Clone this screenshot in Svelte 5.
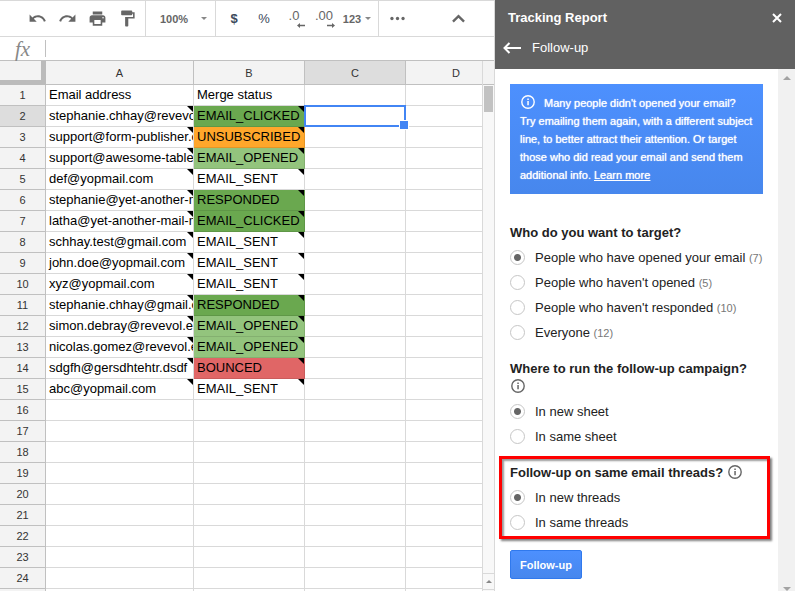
<script lang='ts'>
  interface Row {
    email: string
    status: string
  }

  const columns = ['A', 'B', 'C', 'D']

  const contacts: Row[] = [
    { email: 'stephanie.chhay@revevol', status: 'EMAIL_CLICKED' },
    { email: 'support@form-publisher.c', status: 'UNSUBSCRIBED' },
    { email: 'support@awesome-table.', status: 'EMAIL_OPENED' },
    { email: 'def@yopmail.com', status: 'EMAIL_SENT' },
    { email: 'stephanie@yet-another-m', status: 'RESPONDED' },
    { email: 'latha@yet-another-mail-m', status: 'EMAIL_CLICKED' },
    { email: 'schhay.test@gmail.com', status: 'EMAIL_SENT' },
    { email: 'john.doe@yopmail.com', status: 'EMAIL_SENT' },
    { email: 'xyz@yopmail.com', status: 'EMAIL_SENT' },
    { email: 'stephanie.chhay@gmail.c', status: 'RESPONDED' },
    { email: 'simon.debray@revevol.e', status: 'EMAIL_OPENED' },
    { email: 'nicolas.gomez@revevol.e', status: 'EMAIL_OPENED' },
    { email: 'sdgfh@gersdhtehtr.dsdf', status: 'BOUNCED' },
    { email: 'abc@yopmail.com', status: 'EMAIL_SENT' },
  ]

  const ROW_COUNT = 24
  const SELECTED_ROW = 2
  const emptyRows = Array.from({ length: ROW_COUNT - contacts.length - 1 }, (_, i) => i + contacts.length + 2)

  const targets = [
    { id: 'opened', label: 'People who have opened your email', count: 7 },
    { id: 'not-opened', label: 'People who haven\'t opened', count: 5 },
    { id: 'not-responded', label: 'People who haven\'t responded', count: 10 },
    { id: 'everyone', label: 'Everyone', count: 12 },
  ]

  let target = $state('opened')
  let sheet = $state('new')
  let thread = $state('new')
</script>

{#snippet info()}
  <svg class='info' viewBox='0 0 16 16' aria-hidden='true'>
    <circle cx='8' cy='8' r='6.2' fill='none' stroke='currentColor' stroke-width='1.4' />
    <path d='M7.3 7h1.5v4.2H7.3zM7.3 4.6h1.5v1.4H7.3z' fill='currentColor' />
  </svg>
{/snippet}

<div class='app'>
  <main class='sheet'>
    <div class='toolbar' role='toolbar' aria-label='Formatting'>
      <button class='tool' aria-label='Undo'>
        <svg viewBox='0 0 24 24'><path d='M12.5 8c-2.65 0-5.05.99-6.9 2.6L2 7v9h9l-3.62-3.62c1.39-1.16 3.16-1.88 5.12-1.88 3.54 0 6.55 2.31 7.6 5.5l2.37-.78C21.08 11.03 17.15 8 12.5 8z' /></svg>
      </button>
      <button class='tool' aria-label='Redo'>
        <svg viewBox='0 0 24 24'><path d='M18.4 10.6C16.55 8.99 14.15 8 11.5 8c-4.65 0-8.58 3.03-9.96 7.22L3.9 16c1.05-3.19 4.05-5.5 7.6-5.5 1.95 0 3.73.72 5.12 1.88L13 16h9V7l-3.6 3.6z' /></svg>
      </button>
      <button class='tool' aria-label='Print'>
        <svg viewBox='0 0 24 24'><path d='M19 8H5c-1.66 0-3 1.34-3 3v6h4v4h12v-4h4v-6c0-1.66-1.34-3-3-3zm-3 11H8v-5h8v5zm3-7c-.55 0-1-.45-1-1s.45-1 1-1 1 .45 1 1-.45 1-1 1zm-1-9H6v4h12V3z' /></svg>
      </button>
      <button class='tool' aria-label='Paint format'>
        <svg viewBox='0 0 24 24'><path d='M18 4V3c0-.55-.45-1-1-1H5c-.55 0-1 .45-1 1v4c0 .55.45 1 1 1h12c.55 0 1-.45 1-1V6h1v4H9v11c0 .55.45 1 1 1h2c.55 0 1-.45 1-1v-9h8V4h-3z' /></svg>
      </button>
      <span class='separator'></span>
      <button class='tool zoom'>100% <i class='caret'></i></button>
      <span class='separator'></span>
      <button class='tool symbol dollar'>$</button>
      <button class='tool symbol'>%</button>
      <button class='tool decimal' aria-label='Decrease decimal places'>
        .0
        <svg class='arrow' viewBox='0 0 8 5'><path d='M0 2.5 3 0v1.7h5v1.6H3V5z' /></svg>
      </button>
      <button class='tool decimal' aria-label='Increase decimal places'>
        .00
        <svg class='arrow' viewBox='0 0 8 5'><path d='M8 2.5 5 0v1.7H0v1.6h5V5z' /></svg>
      </button>
      <button class='tool format'>123 <i class='caret'></i></button>
      <span class='separator'></span>
      <button class='tool' aria-label='More'>
        <svg viewBox='0 0 24 24'><circle cx='5' cy='12' r='2.1' /><circle cx='12' cy='12' r='2.1' /><circle cx='19' cy='12' r='2.1' /></svg>
      </button>
      <button class='tool collapse' aria-label='Hide menus'>
        <svg viewBox='0 0 24 24'><path d='M5 16l7-7 7 7' fill='none' stroke='currentColor' stroke-width='3' /></svg>
      </button>
    </div>

    <div class='formula'>
      <span class='fx'>fx</span>
      <input type='text' aria-label='Formula' />
    </div>

    <div class='grid'>
      <div class='cells'>
        <table>
          <colgroup>
            <col class='col-num' />
            <col class='col-a' />
            <col class='col-b' />
            <col class='col-c' />
            <col />
          </colgroup>
          <thead>
            <tr>
              <td class='corner'></td>
              {#each columns as name}
                <th scope='col' class:active={name === 'C'}>{name}</th>
              {/each}
            </tr>
          </thead>
          <tbody>
            <tr>
              <th scope='row'>1</th>
              <td><div class='text'>Email address</div></td>
              <td><div class='text'>Merge status</div></td>
              <td></td>
              <td></td>
            </tr>
            {#each contacts as contact, i}
              <tr>
                <th scope='row' class:active={i + 2 === SELECTED_ROW}>{i + 2}</th>
                <td class='note'><div class='text'>{contact.email}</div></td>
                <td class={['note', contact.status.toLowerCase()]}><div class='text'>{contact.status}</div></td>
                <td class:selected={i + 2 === SELECTED_ROW}></td>
                <td></td>
              </tr>
            {/each}
            {#each emptyRows as n}
              <tr>
                <th scope='row'>{n}</th>
                <td></td>
                <td></td>
                <td></td>
                <td></td>
              </tr>
            {/each}
            <tr>
              <th></th>
              <td></td>
              <td></td>
              <td></td>
              <td></td>
            </tr>
          </tbody>
        </table>
      </div>
      <div class='grid-scroll' aria-hidden='true'>
        <div class='scroll-head'></div>
        <div class='thumb'></div>
        <div class='scroll-button'><i class='caret up'></i></div>
      </div>
    </div>
  </main>

  <aside class='sidebar'>
    <header>
      <div class='title'>
        <h1>Tracking Report</h1>
        <button class='icon' aria-label='Close'>
          <svg class='close' viewBox='0 0 10 10'><path d='M1 1l8 8M9 1L1 9' /></svg>
        </button>
      </div>
      <div class='crumb'>
        <button class='icon' aria-label='Back'>
          <svg class='back' viewBox='0 0 18 12'><path d='M18 6H1.5M6.5 1L1.5 6l5 5' /></svg>
        </button>
        <h2>Follow-up</h2>
      </div>
    </header>

    <div class='body'>
      <form class='content' onsubmit={e => e.preventDefault()}>
        <p class='tip'>
          {@render info()}
          Many people didn't opened your email?<br />
          Try emailing them again, with a different subject line, to better attract their attention. Or target those who did read your email and send them additional info. <a href='#learn'>Learn more</a>
        </p>

        <fieldset>
          <legend>Who do you want to target?</legend>
          {#each targets as option}
            <label>
              <input type='radio' name='target' value={option.id} bind:group={target} />
              <span>{option.label} <small>({option.count})</small></span>
            </label>
          {/each}
        </fieldset>

        <fieldset>
          <legend>Where to run the follow-up campaign? {@render info()}</legend>
          <label><input type='radio' name='sheet' value='new' bind:group={sheet} /> In new sheet</label>
          <label><input type='radio' name='sheet' value='same' bind:group={sheet} /> In same sheet</label>
        </fieldset>

        <div class='highlight'>
          <fieldset>
            <legend>Follow-up on same email threads? {@render info()}</legend>
            <label><input type='radio' name='thread' value='new' bind:group={thread} /> In new threads</label>
            <label><input type='radio' name='thread' value='same' bind:group={thread} /> In same threads</label>
          </fieldset>
        </div>

        <button class='submit' type='submit'>Follow-up</button>
      </form>
      <div class='side-scroll' aria-hidden='true'>
        <i class='caret up'></i>
        <i class='caret'></i>
      </div>
    </div>
  </aside>
</div>

<style>
  :global(body) { margin: 0; }

  .app {
    display: flex;
    height: 100vh;
    overflow: hidden;
    background: #fff;
    font: 13px/18px Arial, 'Liberation Sans', sans-serif;
    color: #222;
  }
  .app * { box-sizing: border-box; }

  button {
    padding: 0;
    border: 0;
    background: none;
    font: inherit;
    color: inherit;
    cursor: pointer;
  }

  /* sheet */
  .sheet {
    flex: 1;
    min-width: 0;
    display: flex;
    flex-direction: column;
    border-right: 1px solid #d9d9d9;
  }

  .toolbar {
    display: flex;
    align-items: center;
    flex-shrink: 0;
    height: 37px;
    padding-left: 22px;
    border: solid #d9d9d9;
    border-width: 1px 0;
    color: #666;
  }
  .tool {
    display: flex;
    align-items: center;
    justify-content: center;
    width: 30px;
    height: 34px;
    font-size: 11px;
    font-weight: bold;
  }
  .tool svg {
    width: 19px;
    height: 19px;
    fill: currentColor;
  }
  .separator {
    width: 1px;
    height: 100%;
    margin: 0 3px;
    background: #d9d9d9;
  }
  .zoom {
    width: 63px;
    padding-left: 6px;
    gap: 13px;
  }
  .symbol {
    font-size: 13px;
    font-weight: normal;
    color: #3c4a5c;
  }
  .tool.dollar { font-weight: bold; }
  .tool.decimal {
    flex-direction: column;
    font-size: 13px;
    font-weight: normal;
    line-height: 14px;
  }
  .tool .arrow {
    align-self: flex-end;
    width: 8px;
    height: 5px;
    margin-right: 4px;
  }
  .format {
    width: 36px;
    gap: 4px;
  }
  .collapse { margin: 0 21px 0 auto; }

  .caret {
    flex-shrink: 0;
    border: 3px solid transparent;
    border-top-color: #888;
    border-bottom: 0;
  }
  .caret.up {
    border-top: 0;
    border-bottom: 3px solid #888;
  }

  .formula {
    display: flex;
    align-items: center;
    flex-shrink: 0;
    height: 24px;
    border-bottom: 1px solid #c0c0c0;
  }
  .fx {
    width: 45px;
    text-align: center;
    font: italic 21px/22px 'Liberation Serif', serif;
    color: #888;
  }
  .formula input {
    flex: 1;
    min-width: 0;
    height: 17px;
    border: 0;
    border-left: 1px solid #c0c0c0;
    outline: 0;
  }

  .grid {
    flex: 1;
    min-height: 0;
    display: flex;
  }
  .cells {
    flex: 1;
    min-width: 0;
    overflow: hidden;
  }
  table {
    width: 100%;
    min-width: 507px;
    table-layout: fixed;
    border-collapse: separate;
    border-spacing: 0;
  }
  .col-num { width: 46px; }
  .col-a { width: 148px; }
  .col-b { width: 111px; }
  .col-c { width: 101px; }

  td, th {
    position: relative;
    height: 21px;
    padding: 0;
    border: solid #d9d9d9;
    border-width: 0 1px 1px 0;
    line-height: 20px;
    color: #000;
  }
  th {
    background: #f3f3f3;
    border-color: #c0c0c0;
    font-size: 11px;
    font-weight: normal;
    color: #333;
  }
  thead th, .corner { height: 24px; }
  th.active { background: #ddd; }
  .corner {
    background: #f3f3f3;
    border: solid #bbb;
    border-width: 0 5px 5px 0;
  }
  .text {
    padding-left: 3px;
    overflow: hidden;
    white-space: nowrap;
  }

  /* black corner that marks a cell comment */
  .note::after {
    content: '';
    position: absolute;
    top: 0;
    right: 0;
    width: 6px;
    height: 6px;
    background: #000;
    clip-path: polygon(0 0, 100% 0, 100% 100%);
  }
  .email_clicked, .responded { background: #6aa84f; border-color: #5f9747; }
  .email_opened { background: #93c47d; border-color: #84b070; }
  .unsubscribed { background: #ffa72b; border-color: #e59627; }
  .bounced { background: #e06666; border-color: #ca5c5c; }

  .selected::before {
    content: '';
    position: absolute;
    inset: -1px;
    border: 2px solid #4285f4;
  }
  .selected::after {
    content: '';
    position: absolute;
    right: -4px;
    bottom: -4px;
    z-index: 1;
    width: 8px;
    height: 8px;
    border: 1px solid #fff;
    background: #4285f4;
  }

  .grid-scroll {
    display: flex;
    flex-direction: column;
    width: 12px;
    border-left: 1px solid #d9d9d9;
    background: #f8f8f8;
  }
  .scroll-head {
    height: 24px;
    border-bottom: 1px solid #c0c0c0;
    background: #f3f3f3;
  }
  .thumb {
    height: 26px;
    margin: 1px;
    background: #c2c2c2;
  }
  .scroll-button {
    display: flex;
    align-items: center;
    justify-content: center;
    height: 17px;
    margin: auto 0 1px;
    border: solid #d9d9d9;
    border-width: 1px 0;
  }

  /* sidebar */
  .sidebar {
    flex: 0 0 300px;
    display: flex;
    flex-direction: column;
  }
  header {
    flex-shrink: 0;
    padding: 9px 13px 12px;
    background: #616161;
    color: #fff;
  }
  .title, .crumb {
    display: flex;
    align-items: center;
  }
  .title { justify-content: space-between; }
  .crumb {
    gap: 11px;
    margin: 12px 0 0 -5px;
  }
  h1, h2 {
    margin: 0;
    font-size: 13px;
    line-height: 18px;
  }
  h2 { font-weight: normal; }
  .icon {
    display: flex;
    align-items: center;
  }
  .icon svg {
    fill: none;
    stroke: currentColor;
    stroke-width: 2;
  }
  .close { width: 10px; height: 10px; }
  .back { width: 18px; height: 12px; }

  .body {
    flex: 1;
    min-height: 0;
    display: flex;
  }
  .content {
    flex: 1;
    min-width: 0;
    padding: 15px;
  }
  .side-scroll {
    display: flex;
    flex-direction: column;
    align-items: center;
    justify-content: space-between;
    width: 17px;
    padding-top: 7px;
    background: #f1f1f1;
  }
  .side-scroll .caret {
    border-width: 4px 4px 0;
    border-top-color: #a3a3a3;
  }
  .side-scroll .caret.up {
    border-width: 0 4px 4px;
    border-bottom-color: #a3a3a3;
  }

  .tip {
    margin: 0 0 29px;
    padding: 10px 8px 10px 10px;
    background: linear-gradient(#4d90fe, #4787ed);
    font-size: 11px;
    color: #fff;
    text-shadow: 0 0 1px #fff;
  }
  .tip a { color: inherit; }
  .info {
    width: 16px;
    height: 16px;
    margin-top: -2px;
    vertical-align: -3px;
    color: #666;
  }
  .tip .info {
    margin-right: 5px;
    color: inherit;
  }

  fieldset {
    min-width: 0;
    margin: 0 0 14px;
    padding: 0;
    border: 0;
  }
  legend {
    padding: 1px 0 3px;
    font-weight: bold;
  }
  label {
    display: flex;
    align-items: center;
    gap: 10px;
    height: 25px;
    white-space: nowrap;
  }
  small {
    font-size: 11px;
    color: #777;
  }
  input[type='radio'] {
    appearance: none;
    flex-shrink: 0;
    width: 15px;
    height: 15px;
    margin: 0 0 1px;
    border: 1px solid #c6c6c6;
    border-radius: 50%;
  }
  input[type='radio']:checked {
    background: radial-gradient(circle, #666 3px, transparent 4px);
  }

  .highlight { position: relative; }
  .highlight::after {
    content: '';
    position: absolute;
    inset: -7px -7px -4px -11px;
    border: 3px solid #f00;
    box-shadow: 2px 2px 2px rgba(0, 0, 0, 0.5), inset 2px 2px 2px rgba(0, 0, 0, 0.4);
    pointer-events: none;
  }

  .submit {
    height: 29px;
    margin-top: 1px;
    padding: 0 9px;
    border: 1px solid #3079ed;
    border-radius: 2px;
    background: linear-gradient(#4d90fe, #4787ed);
    font-size: 11px;
    font-weight: bold;
    color: #fff;
  }
</style>
